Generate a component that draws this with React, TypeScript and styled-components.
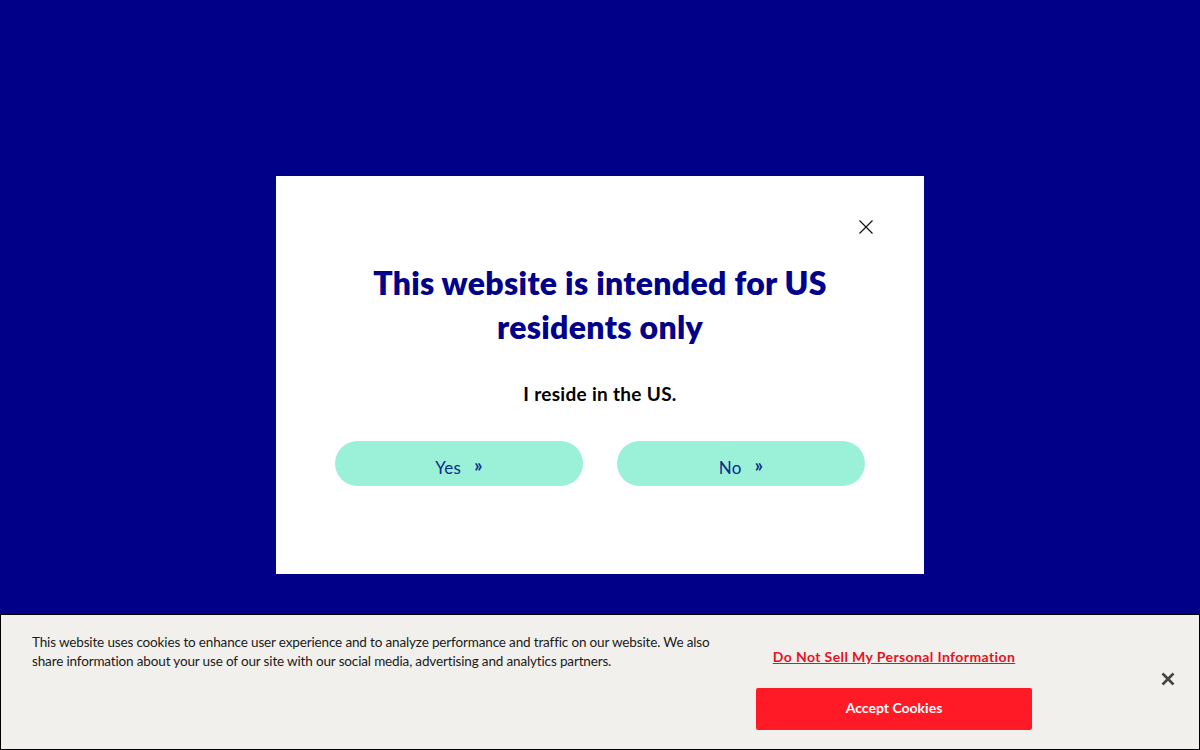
import React from 'react';
import styled, { createGlobalStyle } from 'styled-components';

const GlobalStyle = createGlobalStyle`
  html, body {
    margin: 0;
    padding: 0;
    background: #000088;
    font-family: Lato, "Noto Sans", "Liberation Sans", sans-serif;
  }
  * { box-sizing: border-box; }
`;

const Page = styled.div`
  width: 100%;
  height: 750px;
  display: flex;
  align-items: center;
  justify-content: center;
  background: #000088;
`;

const Modal = styled.div`
  position: relative;
  width: 648px;
  height: 398px;
  background: #fff;
  padding: 85px 59px 0;
  display: flex;
  flex-direction: column;
  align-items: center;
`;

const CloseButton = styled.button`
  position: absolute;
  top: 43px;
  right: 50px;
  width: 16px;
  height: 16px;
  padding: 0;
  border: none;
  background: transparent;
  cursor: pointer;
  display: flex;
`;

const Title = styled.h1`
  margin: 0;
  max-width: 500px;
  text-align: center;
  color: #00008b;
  font-size: 32px;
  line-height: 44px;
  font-weight: 800;
  letter-spacing: 0.3px;
`;

const Question = styled.p`
  margin: 32px 0 0;
  color: #000;
  font-size: 19px;
  line-height: 26px;
  font-weight: 700;
  letter-spacing: 0.3px;
`;

const Choices = styled.div`
  margin-top: 34px;
  display: flex;
  gap: 34px;
`;

const ChoiceButton = styled.button`
  width: 248px;
  height: 45px;
  border: none;
  border-radius: 23px;
  background: #9bf0d8;
  color: #0a2a8a;
  font-family: inherit;
  font-size: 17px;
  letter-spacing: 0.3px;
  cursor: pointer;
  display: flex;
  align-items: center;
  justify-content: center;
  gap: 13px;
  padding-top: 8px;
`;

const Chevrons = styled.span`
  font-weight: 700;
  font-size: 18px;
  margin-top: -4px;
`;

const Banner = styled.div`
  position: fixed;
  left: 0;
  right: 0;
  bottom: 0;
  height: 136px;
  background: #f1f0ec;
  border: 1px solid #000;
  display: flex;
  align-items: flex-start;
  padding: 18px 23px 0 31px;
`;

const BannerText = styled.p`
  margin: 0;
  width: 690px;
  color: #1a1a1a;
  font-size: 13.5px;
  letter-spacing: -0.15px;
  line-height: 19px;
`;

const BannerActions = styled.div`
  margin-left: 34px;
  width: 276px;
  padding-top: 14px;
  display: flex;
  flex-direction: column;
  align-items: center;
  gap: 21px;
`;

const SellLink = styled.a`
  color: #e8121e;
  font-size: 14px;
  line-height: 20px;
  font-weight: 700;
  letter-spacing: 0.4px;
  text-decoration: underline;
  cursor: pointer;
`;

const AcceptButton = styled.button`
  width: 276px;
  height: 42px;
  border: none;
  border-radius: 2px;
  background: #ff1a25;
  color: #fff;
  font-family: inherit;
  font-size: 14px;
  font-weight: 700;
  padding-bottom: 4px;
  cursor: pointer;
`;

const BannerClose = styled.button`
  margin-left: auto;
  align-self: center;
  margin-top: -24px;
  width: 16px;
  height: 16px;
  padding: 0;
  border: none;
  background: transparent;
  cursor: pointer;
  display: flex;
`;

const App: React.FC = () => {
  return (
    <>
      <GlobalStyle />
      <Page>
        <Modal>
          <CloseButton aria-label="Close">
            <svg width="16" height="16" viewBox="0 0 16 16">
              <path d="M1.5 1.5 L14.5 14.5 M14.5 1.5 L1.5 14.5" stroke="#111" strokeWidth="1.2" fill="none" />
            </svg>
          </CloseButton>
          <Title>This website is intended for US residents only</Title>
          <Question>I reside in the US.</Question>
          <Choices>
            <ChoiceButton>Yes <Chevrons>»</Chevrons></ChoiceButton>
            <ChoiceButton>No <Chevrons>»</Chevrons></ChoiceButton>
          </Choices>
        </Modal>
      </Page>
      <Banner>
        <BannerText>
          This website uses cookies to enhance user experience and to analyze performance and traffic on our website. We also share information about your use of our site with our social media, advertising and analytics partners.
        </BannerText>
        <BannerActions>
          <SellLink>Do Not Sell My Personal Information</SellLink>
          <AcceptButton>Accept Cookies</AcceptButton>
        </BannerActions>
        <BannerClose aria-label="Close cookie banner">
          <svg width="16" height="16" viewBox="0 0 16 16">
            <path d="M2.5 2.5 L13.5 13.5 M13.5 2.5 L2.5 13.5" stroke="#444" strokeWidth="2.6" fill="none" />
          </svg>
        </BannerClose>
      </Banner>
    </>
  );
};

export default App;
